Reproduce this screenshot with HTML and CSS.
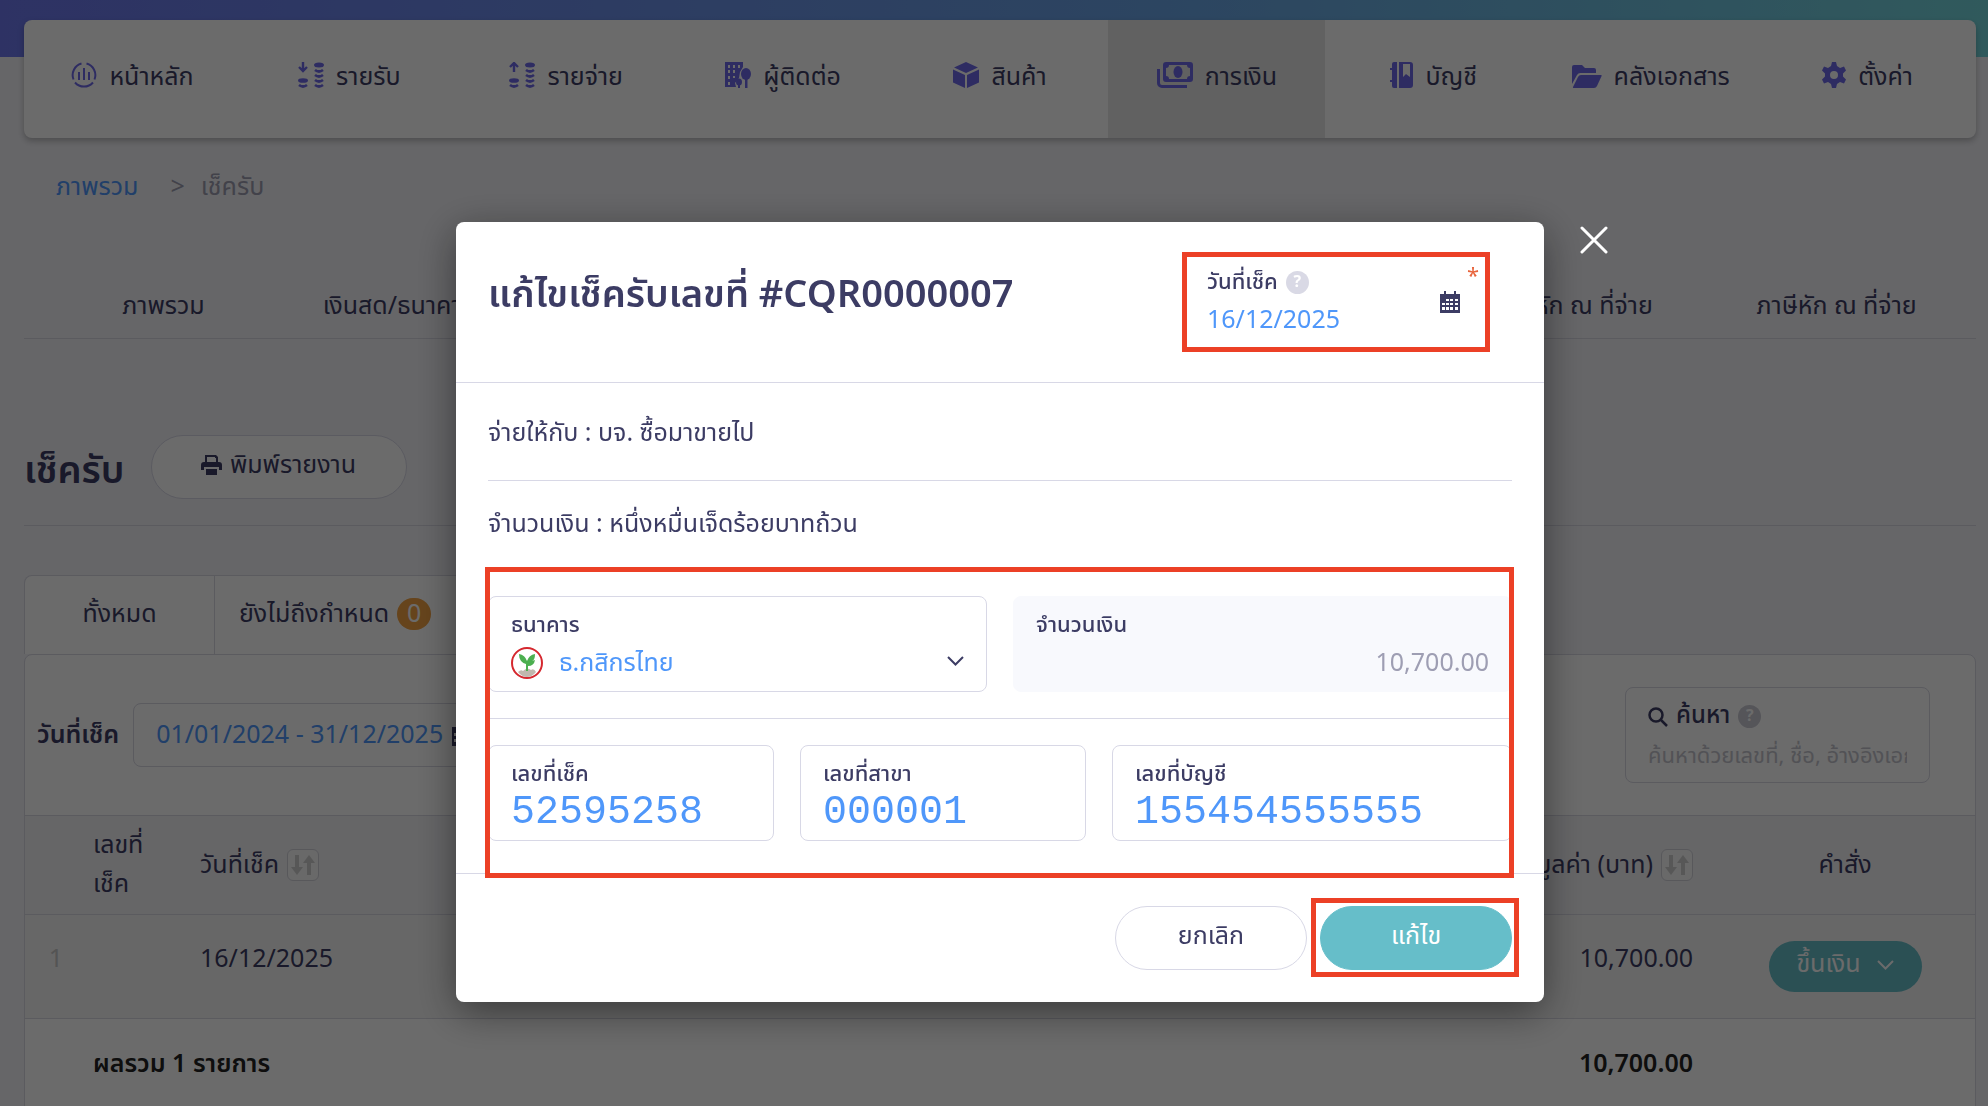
FILE: index.html
```html
<!DOCTYPE html>
<html lang="th">
<head>
  <meta charset="UTF-8">
  <title>เช็ครับ</title>
  <link rel="stylesheet" href="styles.css">
</head>
<body>
<div class="top-band"></div>

<!-- Main menu -->
<nav class="main-nav">
  <a href="#" class="nav-item">
    <svg class="nav-icon" width="26" height="26" viewBox="0 0 26 26" fill="none" stroke="currentColor" stroke-width="2"><path d="M10.500 1.500A12 12 0 0 0 2.500 17.500M15.500 1.500A12 12 0 0 1 23.500 17.500M4 20.500a12 12 0 0 0 18 0M8 10v8M13 6v12M18 10v8" stroke-linecap="butt"/></svg>
    <span>หน้าหลัก</span>
  </a>
  <a href="#" class="nav-item">
    <svg class="nav-icon" width="26" height="26" viewBox="0 0 26 26"><path d="M5 0v8M1 5l4 4 4-4" fill="none" stroke="currentColor" stroke-width="2.400"/><g fill="currentColor"><ellipse cx="5" cy="18.500" rx="5" ry="2.300"/><ellipse cx="21" cy="3" rx="5" ry="2.500"/></g><path d="M1 23q4 3 8 0M17 8q4 3 8 0M17 13q4 3 8 0M17 18q4 3 8 0M17 23q4 3 8 0" fill="none" stroke="currentColor" stroke-width="2.800"/></svg>
    <span>รายรับ</span>
  </a>
  <a href="#" class="nav-item">
    <svg class="nav-icon" width="26" height="26" viewBox="0 0 26 26"><path d="M5 10V2M1 5l4-4 4 4" fill="none" stroke="currentColor" stroke-width="2.400"/><g fill="currentColor"><ellipse cx="5" cy="18.500" rx="5" ry="2.300"/><ellipse cx="21" cy="3" rx="5" ry="2.500"/></g><path d="M1 23q4 3 8 0M17 8q4 3 8 0M17 13q4 3 8 0M17 18q4 3 8 0M17 23q4 3 8 0" fill="none" stroke="currentColor" stroke-width="2.800"/></svg>
    <span>รายจ่าย</span>
  </a>
  <a href="#" class="nav-item">
    <svg class="nav-icon" width="26" height="26" viewBox="0 0 26 26" fill="currentColor"><path fill-rule="evenodd" d="M0 0h18v5l-3 5-1 6-4 5 1 4H0zM3 3v3h2V3zM8 3v3h2V3zM13 3v3h2V3zM3 8v3h2V8zM8 8v3h2V8zM3 14v3h2v-3zM3 20v3h2v-3zM8 14v2h2v-2z"/><ellipse cx="21" cy="12" rx="5" ry="6"/><path d="M20 12h2.500v14H20z"/><ellipse cx="14" cy="20" rx="3" ry="3.500"/><path d="M13 21h2v5h-2z"/></svg>
    <span>ผู้ติดต่อ</span>
  </a>
  <a href="#" class="nav-item">
    <svg class="nav-icon" width="26" height="26" viewBox="0 0 26 26" fill="currentColor"><path d="M13 0l12 5.500L13 11 1 5.500zM0 7.500l12 5.500v13L0 20.500zM26 7.500L14 13v13l12-5.500z"/></svg>
    <span>สินค้า</span>
  </a>
  <a href="#" class="nav-item active">
    <svg class="nav-icon" width="36" height="26" viewBox="0 0 36 26"><path fill="currentColor" fill-rule="evenodd" d="M9 0h24a3 3 0 0 1 3 3v14a3 3 0 0 1-3 3H9a3 3 0 0 1-3-3V3a3 3 0 0 1 3-3zM12 3a3 3 0 0 1-3 3v8a3 3 0 0 1 3 3h18a3 3 0 0 1 3-3V6a3 3 0 0 1-3-3z"/><ellipse cx="21" cy="10" rx="4.500" ry="6" fill="currentColor"/><path d="M1.500 7v14a3.500 3.500 0 0 0 3.500 3.500h25" fill="none" stroke="currentColor" stroke-width="3"/></svg>
    <span>การเงิน</span>
  </a>
  <a href="#" class="nav-item">
    <svg class="nav-icon" width="23" height="26" viewBox="0 0 23 26" fill="currentColor"><path d="M4 0h3v26H4a2 2 0 0 1-2-2v-4H0v-2h2V8H0V6h2V2a2 2 0 0 1 2-2z"/><path fill-rule="evenodd" d="M9 0h11a3 3 0 0 1 3 3v20a3 3 0 0 1-3 3H9zM13 2v13l3-3 4 3V2z"/></svg>
    <span>บัญชี</span>
  </a>
  <a href="#" class="nav-item">
    <svg class="nav-icon" width="30" height="26" viewBox="0 0 30 26" fill="currentColor"><path d="M2 3h8l3 3h9a2 2 0 0 1 2 2v3H9a4 4 0 0 0-4 2L0 22V5a2 2 0 0 1 2-2z"/><path d="M9 13h20q1 0 .6 1L25 24q-1 2-3 2H1.500q-1 0-.5-1l5-10q1-2 3-2z"/></svg>
    <span>คลังเอกสาร</span>
  </a>
  <a href="#" class="nav-item">
    <svg class="nav-icon" width="24" height="26" viewBox="0 0 24 26" fill="currentColor"><path fill-rule="evenodd" d="M10 0h4l1 4 3 2 4-1.500 2 4-3 3v3l3 3-2 4-4-1.500-3 2-1 4h-4l-1-4-3-2-4 1.500-2-4 3-3v-3l-3-3 2-4L6 6l3-2zM12 9a4 4 0 1 0 0 8 4 4 0 0 0 0-8z"/></svg>
    <span>ตั้งค่า</span>
  </a>
</nav>

<main class="page">
  <div class="breadcrumb">
    <a href="#">ภาพรวม</a>
    <span class="separator">&gt;</span>
    <span>เช็ครับ</span>
  </div>

  <nav class="sub-nav">
    <a href="#">ภาพรวม</a>
    <a href="#" class="tab-cash">เงินสด/ธนาคาร</a>
    <a href="#" class="tab-withheld">ภาษีถูกหัก ณ ที่จ่าย</a>
    <a href="#">ภาษีหัก ณ ที่จ่าย</a>
  </nav>

  <header class="page-header">
    <h1>เช็ครับ</h1>
    <button type="button" class="btn btn-print">
      <svg width="21" height="20" viewBox="0 0 21 20" fill="currentColor"><path fill-rule="evenodd" d="M4 0h11l2 2v6H4zM6 2v5h9V3h-1V2z"/><path d="M3 7h15a3 3 0 0 1 3 3v5h-3v-3H3v3H0v-5a3 3 0 0 1 3-3zM5 14h11v6H5z"/></svg>
      พิมพ์รายงาน
    </button>
  </header>

  <div class="status-tabs">
    <button type="button" class="status-tab tab-all">ทั้งหมด</button>
    <button type="button" class="status-tab">ยังไม่ถึงกำหนด <span class="badge">0</span></button>
  </div>

  <section class="card">
    <div class="filters">
      <label for="range" class="range-label">วันที่เช็ค</label>
      <div class="range-box">
        <input type="text" id="range" value="01/01/2024 - 31/12/2025">
        <svg width="20" height="22" viewBox="0 0 20 22" fill="currentColor"><path fill-rule="evenodd" d="M0 3h20v19H0zM2 9v3h3V9zM7 9v3h3V9zM12 9v3h3V9zM2 15v3h3v-3zM7 15v3h3v-3z"/></svg>
      </div>
      <div class="search-box">
        <label for="search" class="search-label">
          <svg width="20" height="20" viewBox="0 0 20 20" fill="none" stroke="currentColor" stroke-width="2.500"><circle cx="8" cy="8" r="6.500"/><path d="M13 13l6 6"/></svg>
          ค้นหา <span class="help help-dark">?</span>
        </label>
        <input type="text" id="search" placeholder="ค้นหาด้วยเลขที่, ชื่อ, อ้างอิงเอกสาร">
      </div>
    </div>

    <table class="cheque-table">
      <colgroup>
        <col class="col-no"><col class="col-cheque"><col class="col-date"><col><col class="col-amount"><col class="col-action">
      </colgroup>
      <thead>
        <tr>
          <th></th>
          <th>เลขที่<br>เช็ค</th>
          <th><span class="sortable">วันที่เช็ค <button type="button" class="sort-btn" aria-label="เรียง"><svg width="24" height="20" viewBox="0 0 24 20" fill="currentColor"><path d="M4 0h4v12h4l-6 8-6-8h4zM16 20h4V8h4L18 0l-6 8h4z"/></svg></button></span></th>
          <th></th>
          <th class="num"><span class="sortable">มูลค่า (บาท) <button type="button" class="sort-btn" aria-label="เรียง"><svg width="24" height="20" viewBox="0 0 24 20" fill="currentColor"><path d="M4 0h4v12h4l-6 8-6-8h4zM16 20h4V8h4L18 0l-6 8h4z"/></svg></button></span></th>
          <th class="action">คำสั่ง</th>
        </tr>
      </thead>
      <tbody>
        <tr>
          <td class="row-no">1</td>
          <td></td>
          <td>16/12/2025</td>
          <td></td>
          <td class="num">10,700.00</td>
          <td class="action">
            <button type="button" class="btn btn-deposit">ขึ้นเงิน
              <svg width="17" height="10" viewBox="0 0 17 10" fill="none" stroke="currentColor" stroke-width="2"><path d="M1 1l7.500 7.500L16 1"/></svg>
            </button>
          </td>
        </tr>
      </tbody>
      <tfoot>
        <tr>
          <td></td>
          <td colspan="2">ผลรวม 1 รายการ</td>
          <td></td>
          <td class="num">10,700.00</td>
          <td></td>
        </tr>
      </tfoot>
    </table>
  </section>
</main>

<!-- Edit cheque dialog -->
<div class="overlay">
  <form class="modal" role="dialog" aria-labelledby="modal-title">
    <button type="button" class="modal-close" aria-label="ปิด">
      <svg width="28" height="28" viewBox="0 0 28 28" fill="none" stroke="currentColor" stroke-width="3" stroke-linecap="round"><path d="M2 2l24 24M26 2L2 26"/></svg>
    </button>

    <header class="modal-header">
      <h2 id="modal-title">แก้ไขเช็ครับเลขที่ #CQR0000007</h2>
      <div class="date-field highlight">
        <div class="date-text">
          <label for="cheque-date">วันที่เช็ค <span class="help">?</span></label>
          <input type="text" id="cheque-date" value="16/12/2025">
        </div>
        <svg width="20" height="22" viewBox="0 0 20 22" fill="currentColor"><path fill-rule="evenodd" d="M4 0h2v3h8V0h2v3h4v19H0V3h4zM2 12v2h3v-2zM6 12v2h3v-2zM10 12v2h3v-2zM15 12v2h3v-2zM6 8v2h3V8zM10 8v2h3V8zM15 8v2h3V8zM2 16v3h3v-3zM6 16v3h3v-3zM10 16v3h3v-3zM15 16v3h3v-3z"/></svg>
        <span class="required">*</span>
      </div>
    </header>

    <div class="modal-body">
      <p class="line">จ่ายให้กับ : บจ. ซื้อมาขายไป</p>
      <p class="line">จำนวนเงิน : หนึ่งหมื่นเจ็ดร้อยบาทถ้วน</p>
      <div class="field-group">
        <div class="field-row">
          <div class="field">
            <label for="bank">ธนาคาร</label>
            <div class="bank-value">
              <svg class="bank-logo" width="32" height="32" viewBox="0 0 32 32"><circle cx="16" cy="16" r="15" fill="#fff" stroke="#d5282f" stroke-width="2"/><path d="M7 25q3-3 5-1 4-4 8-1 3-2 5 2-4 5-9 5t-9-5z" fill="#c0b8ae"/><path d="M15 24v-7Q8 15 8 7q6 1 8 7 2-6 8-7 0 6-3 7l3-1q-1 6-7 6v5z" fill="#4caf50"/></svg>
              <select id="bank"><option>ธ.กสิกรไทย</option></select>
              <svg class="chevron" width="17" height="10" viewBox="0 0 17 10" fill="none" stroke="currentColor" stroke-width="2"><path d="M1 1l7.500 7.500L16 1"/></svg>
            </div>
          </div>
          <div class="field field-readonly">
            <label for="amount">จำนวนเงิน</label>
            <input type="text" id="amount" value="10,700.00" readonly>
          </div>
        </div>
        <div class="field-row cheque-row">
          <div class="field">
            <label for="cheque-no">เลขที่เช็ค</label>
            <input type="text" id="cheque-no" class="micr" value="52595258">
          </div>
          <div class="field">
            <label for="branch-no">เลขที่สาขา</label>
            <input type="text" id="branch-no" class="micr" value="000001">
          </div>
          <div class="field">
            <label for="account-no">เลขที่บัญชี</label>
            <input type="text" id="account-no" class="micr" value="155454555555">
          </div>
        </div>
      </div>
    </div>

    <footer class="modal-footer">
      <button type="button" class="btn btn-cancel">ยกเลิก</button>
      <button type="submit" class="btn btn-save">แก้ไข</button>
    </footer>
  </form>
</div>
</body>
</html>
```

FILE: styles.css
```css
* {
  box-sizing: border-box;
}

body {
  margin: 0;
  height: 100vh;
  overflow: hidden;
  background: #f3f3f8;
  color: #3c3c64;
  font-family: "Noto Sans Thai", "Noto Sans", sans-serif;
  font-size: 25px;
  font-weight: 400;
  line-height: 39px;
}

a {
  color: inherit;
  text-decoration: none;
}

button, input, select {
  font: inherit;
  color: inherit;
}

input, select {
  width: 100%;
  padding: 0;
  border: 0;
  outline: 0;
  background: transparent;
  color: #4f97fa;
}

svg {
  flex: none;
}

.top-band {
  height: 57px;
  background: linear-gradient(90deg, #6e78ee, #6aa6e6 60%, #74d6dc);
}

/* Main menu */
.main-nav {
  display: grid;
  grid-template-columns: repeat(9, 1fr);
  position: relative;
  margin: -37px 12px 0 24px;
  height: 118px;
  border-radius: 8px;
  background: #fff;
  box-shadow: 0 3px 6px rgba(0, 0, 0, .25);
}

.nav-item {
  display: flex;
  justify-content: center;
  padding-top: 38px;
  gap: 12px;
  white-space: nowrap;
}

.nav-item.active {
  background: #e6e6e6;
}

.nav-icon {
  margin-top: 4px;
  color: #6e6aea;
}

/* Page content */
.page {
  margin: 0 12px 0 24px;
}

.breadcrumb {
  display: flex;
  margin: 30px 32px 0;
  color: #9e9eb1;
}

.breadcrumb a {
  color: #4f97fa;
}

.separator {
  margin: 0 16px 0 32px;
}

.sub-nav {
  display: grid;
  grid-template-columns: repeat(7, 1fr);
  height: 132px;
  align-items: end;
  padding-bottom: 12px;
  border-bottom: 1px solid #d8d8e3;
  text-align: center;
  white-space: nowrap;
}

.tab-cash {
  padding-left: 20px;
  text-align: left;
}

.tab-withheld {
  grid-column: 6;
}

.page-header {
  display: flex;
  align-items: center;
  gap: 26px;
  height: 187px;
  padding-top: 70px;
  border-bottom: 1px solid #d8d8e3;
}

.page-header h1 {
  margin: 8px 0 0;
  font-size: 38px;
  font-weight: 600;
}

.btn {
  display: flex;
  align-items: center;
  justify-content: center;
  height: 64px;
  border: 1px solid #d8d8e6;
  border-radius: 32px;
  background: #fff;
  padding: 0 0 4px;
}

.btn-print {
  width: 256px;
  gap: 8px;
}

.status-tabs {
  display: flex;
  width: 40%;
  height: 79px;
  margin-top: 49px;
  border: 1px solid #d8d8e3;
  border-bottom: 0;
  border-radius: 8px 8px 0 0;
  background: #fff;
}

.status-tab {
  display: flex;
  align-items: center;
  padding: 0 24px 2px;
  gap: 8px;
  border: 0;
  background: none;
}

.tab-all {
  width: 190px;
  justify-content: center;
  border-right: 1px solid #d8d8e3;
}

.badge {
  width: 34px;
  height: 32px;
  border-radius: 16px;
  background: #f2a244;
  color: #fff;
  line-height: 32px;
}

.card {
  border: 1px solid #d8d8e3;
  border-radius: 8px 8px 0 0;
  background: #fff;
}

.filters {
  display: flex;
  align-items: center;
  height: 160px;
  padding: 0 45px 0 12px;
}

.range-label {
  font-weight: 600;
}

.range-box {
  display: flex;
  align-items: center;
  gap: 8px;
  width: 360px;
  height: 64px;
  margin-left: 14px;
  padding: 0 22px;
  border: 1px solid #d8d8e3;
  border-radius: 8px;
}

.range-box input {
  width: 288px;
}

.search-box {
  width: 305px;
  height: 96px;
  margin-left: auto;
  padding: 9px 22px;
  border: 1px solid #d8d8e3;
  border-radius: 8px;
}

.search-label {
  display: flex;
  align-items: center;
  gap: 8px;
  height: 39px;
  font-size: 24px;
  font-weight: 500;
}

.search-box input {
  height: 36px;
  font-size: 22px;
}

.search-box input::placeholder {
  color: #c4c4cc;
}

.help {
  display: inline-block;
  width: 23px;
  height: 23px;
  border-radius: 50%;
  background: #d9d9e5;
  color: #fff;
  font-size: 16px;
  font-weight: 700;
  line-height: 23px;
  text-align: center;
}

.help-dark {
  background: #cacad4;
}

/* Cheque table */
.cheque-table {
  width: 100%;
  table-layout: fixed;
  border-collapse: collapse;
}

.col-no {
  width: 46px;
}

.col-cheque {
  width: 107px;
}

.col-date {
  width: 300px;
}

.col-amount {
  width: 320px;
}

.col-action {
  width: 260px;
}

.cheque-table th, .cheque-table td {
  padding: 0 22px;
  border-top: 1px solid #d8d8e3;
  text-align: left;
}

.cheque-table th {
  height: 99px;
  background: #f3f3f6;
  font-weight: 400;
}

.cheque-table td {
  height: 104px;
  background: #f6f6f6;
}

.cheque-table tbody td {
  padding-bottom: 14px;
}

.cheque-table .num {
  text-align: right;
}

.cheque-table .action {
  text-align: center;
}

.cheque-table .row-no {
  padding-right: 8px;
  padding-left: 0;
  color: #c8c8c8;
  text-align: right;
}

.cheque-table tfoot td {
  height: 92px;
  background: #fff;
  color: #222;
  font-weight: 600;
}

.sortable {
  display: inline-flex;
  align-items: center;
  gap: 8px;
}

.sort-btn {
  display: flex;
  align-items: center;
  justify-content: center;
  width: 32px;
  height: 32px;
  padding: 0;
  border: 1px solid #d2d2da;
  border-radius: 6px;
  background: #fafafa;
  color: #d0d0d0;
}

.btn-deposit {
  width: 153px;
  height: 51px;
  margin: 14px auto 0;
  gap: 16px;
  border: 0;
  background: #66bec9;
  color: #fff;
}

/* Dialog */
.overlay {
  position: fixed;
  inset: 0;
  padding: 222px 0 0 12px;
  background: rgba(0, 0, 0, .58);
}

.modal {
  position: relative;
  width: 1088px;
  max-width: 90%;
  margin: 0 auto;
  border-radius: 8px;
  background: #fff;
  box-shadow: 0 10px 40px rgba(0, 0, 0, .45);
}

.modal-close {
  position: absolute;
  top: 4px;
  right: -64px;
  padding: 0;
  border: 0;
  background: none;
  line-height: 0;
  color: #fff;
}

.modal-header {
  display: flex;
  justify-content: space-between;
  align-items: flex-start;
  height: 161px;
  padding: 30px 54px 0 32px;
  border-bottom: 1px solid #d8d8e6;
}

.modal-header h2 {
  margin: 16px 0 0;
  font-size: 38px;
  font-weight: 600;
  line-height: 56px;
}

.highlight {
  outline: 5px solid #ec4026;
}

.date-field {
  display: flex;
  align-items: center;
  position: relative;
  width: 298px;
  height: 90px;
  margin: 5px;
  padding: 0 25px 0 20px;
}

.date-text {
  flex: 1;
}

.date-text label {
  display: flex;
  align-items: center;
  gap: 8px;
  height: 36px;
  font-size: 22px;
  font-weight: 500;
}

.date-text input {
  height: 38px;
}

.required {
  position: absolute;
  top: 0;
  right: 6px;
  color: #e8643c;
  font-size: 22px;
}

.modal-body {
  padding: 0 32px;
}

.line {
  height: 97px;
  margin: 0;
  padding-top: 31px;
}

.line + .line {
  height: 92px;
  padding-top: 24px;
  border-top: 1px solid #d8d8e6;
}

.field-group {
  position: relative;
  padding: 24px 0 32px;
}

/* Red marker frame around all cheque fields */
.field-group::after {
  content: "";
  position: absolute;
  inset: -5px -2px -5px -3px;
  border: 5px solid #ec4026;
  pointer-events: none;
}

.field-row {
  display: grid;
  grid-template-columns: 1fr 1fr;
  gap: 26px;
}

.cheque-row {
  grid-template-columns: 286px 286px 1fr;
  margin-top: 26px;
  padding-top: 26px;
  border-top: 1px solid #d8d8e6;
}

.field {
  height: 96px;
  padding: 9px 22px;
  border: 1px solid #d8d8e6;
  border-radius: 8px;
}

.field label {
  display: block;
  height: 39px;
  font-size: 22px;
  font-weight: 500;
}

.field input {
  display: block;
  height: 36px;
}

.field-readonly {
  border-color: #f8f9fd;
  background: #f8f9fd;
}

.field-readonly input {
  color: #9e9eb3;
  text-align: right;
}

.field .micr {
  font-family: "Liberation Mono", monospace;
  font-size: 40px;
}

.bank-value {
  display: flex;
  align-items: center;
  height: 36px;
}

.bank-value select {
  height: 36px;
  margin-left: 16px;
  appearance: none;
  line-height: 36px;
}

.chevron {
  margin-bottom: 4px;
}

.modal-footer {
  display: flex;
  justify-content: flex-end;
  gap: 13px;
  padding: 32px;
  border-top: 1px solid #d8d8e6;
}

.btn-cancel, .btn-save {
  width: 192px;
}

.btn-save {
  position: relative;
  border-color: #66bec9;
  background: #66bec9;
  color: #fff;
}

.btn-save::after {
  content: "";
  position: absolute;
  inset: -9px -8px -8px -10px;
  border: 5px solid #ec4026;
}
```
